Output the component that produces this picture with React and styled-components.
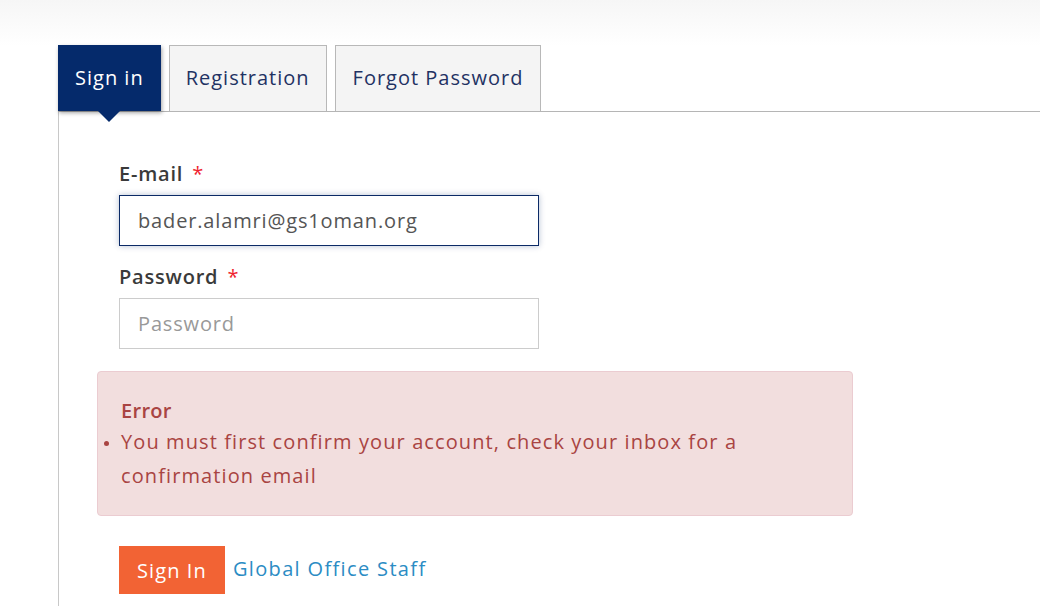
import React from 'react';
import styled, { createGlobalStyle } from 'styled-components';

const GlobalStyle = createGlobalStyle`
  html, body {
    margin: 0;
    padding: 0;
    background: linear-gradient(#f6f6f6 0px, #ffffff 46px) no-repeat;
    background-color: #ffffff;
    font-family: "Open Sans", "Noto Sans", sans-serif;
  }
  * { box-sizing: border-box; }
`;

const Page = styled.div`
  padding: 45px 0 0 58px;
  height: 606px;
  overflow: hidden;
`;

const TabBar = styled.div`
  display: flex;
  gap: 8px;
  border-bottom: 1px solid #b5b5b5;
  height: 67px;
`;

const Tab = styled.div`
  position: relative;
  display: flex;
  align-items: center;
  height: 66px;
  padding: 0 ${p => p.pad}px 2px;
  font-size: 20px;
  letter-spacing: 1px;
  color: ${p => (p.active ? '#ffffff' : '#1f3263')};
  background: ${p => (p.active ? '#052a6b' : '#f4f4f4')};
  border: 1px solid ${p => (p.active ? '#052a6b' : '#b8b8b8')};
  border-bottom: none;
  box-shadow: ${p => (p.active ? '1px 2px 4px rgba(0,0,0,0.35)' : 'none')};
  z-index: ${p => (p.active ? 2 : 1)};

  ${p => p.active && `
    &::after {
      content: '';
      position: absolute;
      left: 50%;
      bottom: -11px;
      margin-left: -11px;
      border-left: 11px solid transparent;
      border-right: 11px solid transparent;
      border-top: 11px solid #052a6b;
    }
  `}
`;

const Panel = styled.div`
  border-left: 1px solid #c8c8c8;
  padding: 48px 0 40px 38px;
  min-height: 500px;
`;

const Field = styled.div`
  padding-left: 22px;
  margin-bottom: 17px;
`;

const Label = styled.label`
  display: block;
  font-size: 20px;
  font-weight: 600;
  letter-spacing: 0.8px;
  color: #3a3a3a;
  margin-bottom: 8px;
`;

const Star = styled.span`
  color: #ef1f2f;
  font-weight: 400;
  margin-left: 9px;
`;

const Input = styled.input`
  display: block;
  width: 420px;
  height: 51px;
  padding: 0 18px;
  font-family: inherit;
  font-size: 20px;
  letter-spacing: 0.85px;
  color: #555555;
  background: #ffffff;
  border: 1px solid ${p => (p.focused ? '#0b2a66' : '#cccccc')};
  box-shadow: ${p => (p.focused ? '0 0 6px rgba(11,42,102,0.3)' : 'none')};
  outline: none;
  border-radius: 0;
  &::placeholder { color: #999999; }
`;

const Alert = styled.div`
  width: 756px;
  margin-top: 22px;
  padding: 25px 23px 22px;
  background: #f2dede;
  border: 1px solid #ebccd1;
  border-radius: 4px;
  color: #a94442;
  font-size: 20px;
  letter-spacing: 1.1px;
`;

const AlertTitle = styled.div`
  font-weight: 600;
  letter-spacing: 0.3px;
  line-height: 28px;
`;

const AlertList = styled.ul`
  margin: 0;
  padding: 0;
  max-width: 660px;
  list-style-position: outside;
  line-height: 34px;

  li::marker { font-size: 14px; }
`;

const Actions = styled.div`
  display: flex;
  align-items: center;
  gap: 8px;
  margin-top: 30px;
  padding-left: 22px;
`;

const Button = styled.button`
  height: 48px;
  padding: 0 18px;
  background: #f26334;
  color: #ffffff;
  border: none;
  border-radius: 0;
  font-family: inherit;
  font-size: 20px;
  letter-spacing: 1.1px;
`;

const StaffLink = styled.a`
  color: #2b8cc4;
  font-size: 20px;
  letter-spacing: 1.35px;
  text-decoration: none;
  margin-top: -4px;
`;

export default function App() {
  return (
    <>
      <GlobalStyle />
      <Page>
        <TabBar>
          <Tab active pad={16}>Sign in</Tab>
          <Tab pad={16}>Registration</Tab>
          <Tab pad={17}>Forgot Password</Tab>
        </TabBar>
        <Panel>
          <Field>
            <Label>E-mail<Star>*</Star></Label>
            <Input focused defaultValue="bader.alamri@gs1oman.org" />
          </Field>
          <Field>
            <Label>Password<Star>*</Star></Label>
            <Input type="password" placeholder="Password" />
          </Field>
          <Alert>
            <AlertTitle>Error</AlertTitle>
            <AlertList>
              <li>You must first confirm your account, check your inbox for a confirmation email</li>
            </AlertList>
          </Alert>
          <Actions>
            <Button>Sign In</Button>
            <StaffLink href="#">Global Office Staff</StaffLink>
          </Actions>
        </Panel>
      </Page>
    </>
  );
}
